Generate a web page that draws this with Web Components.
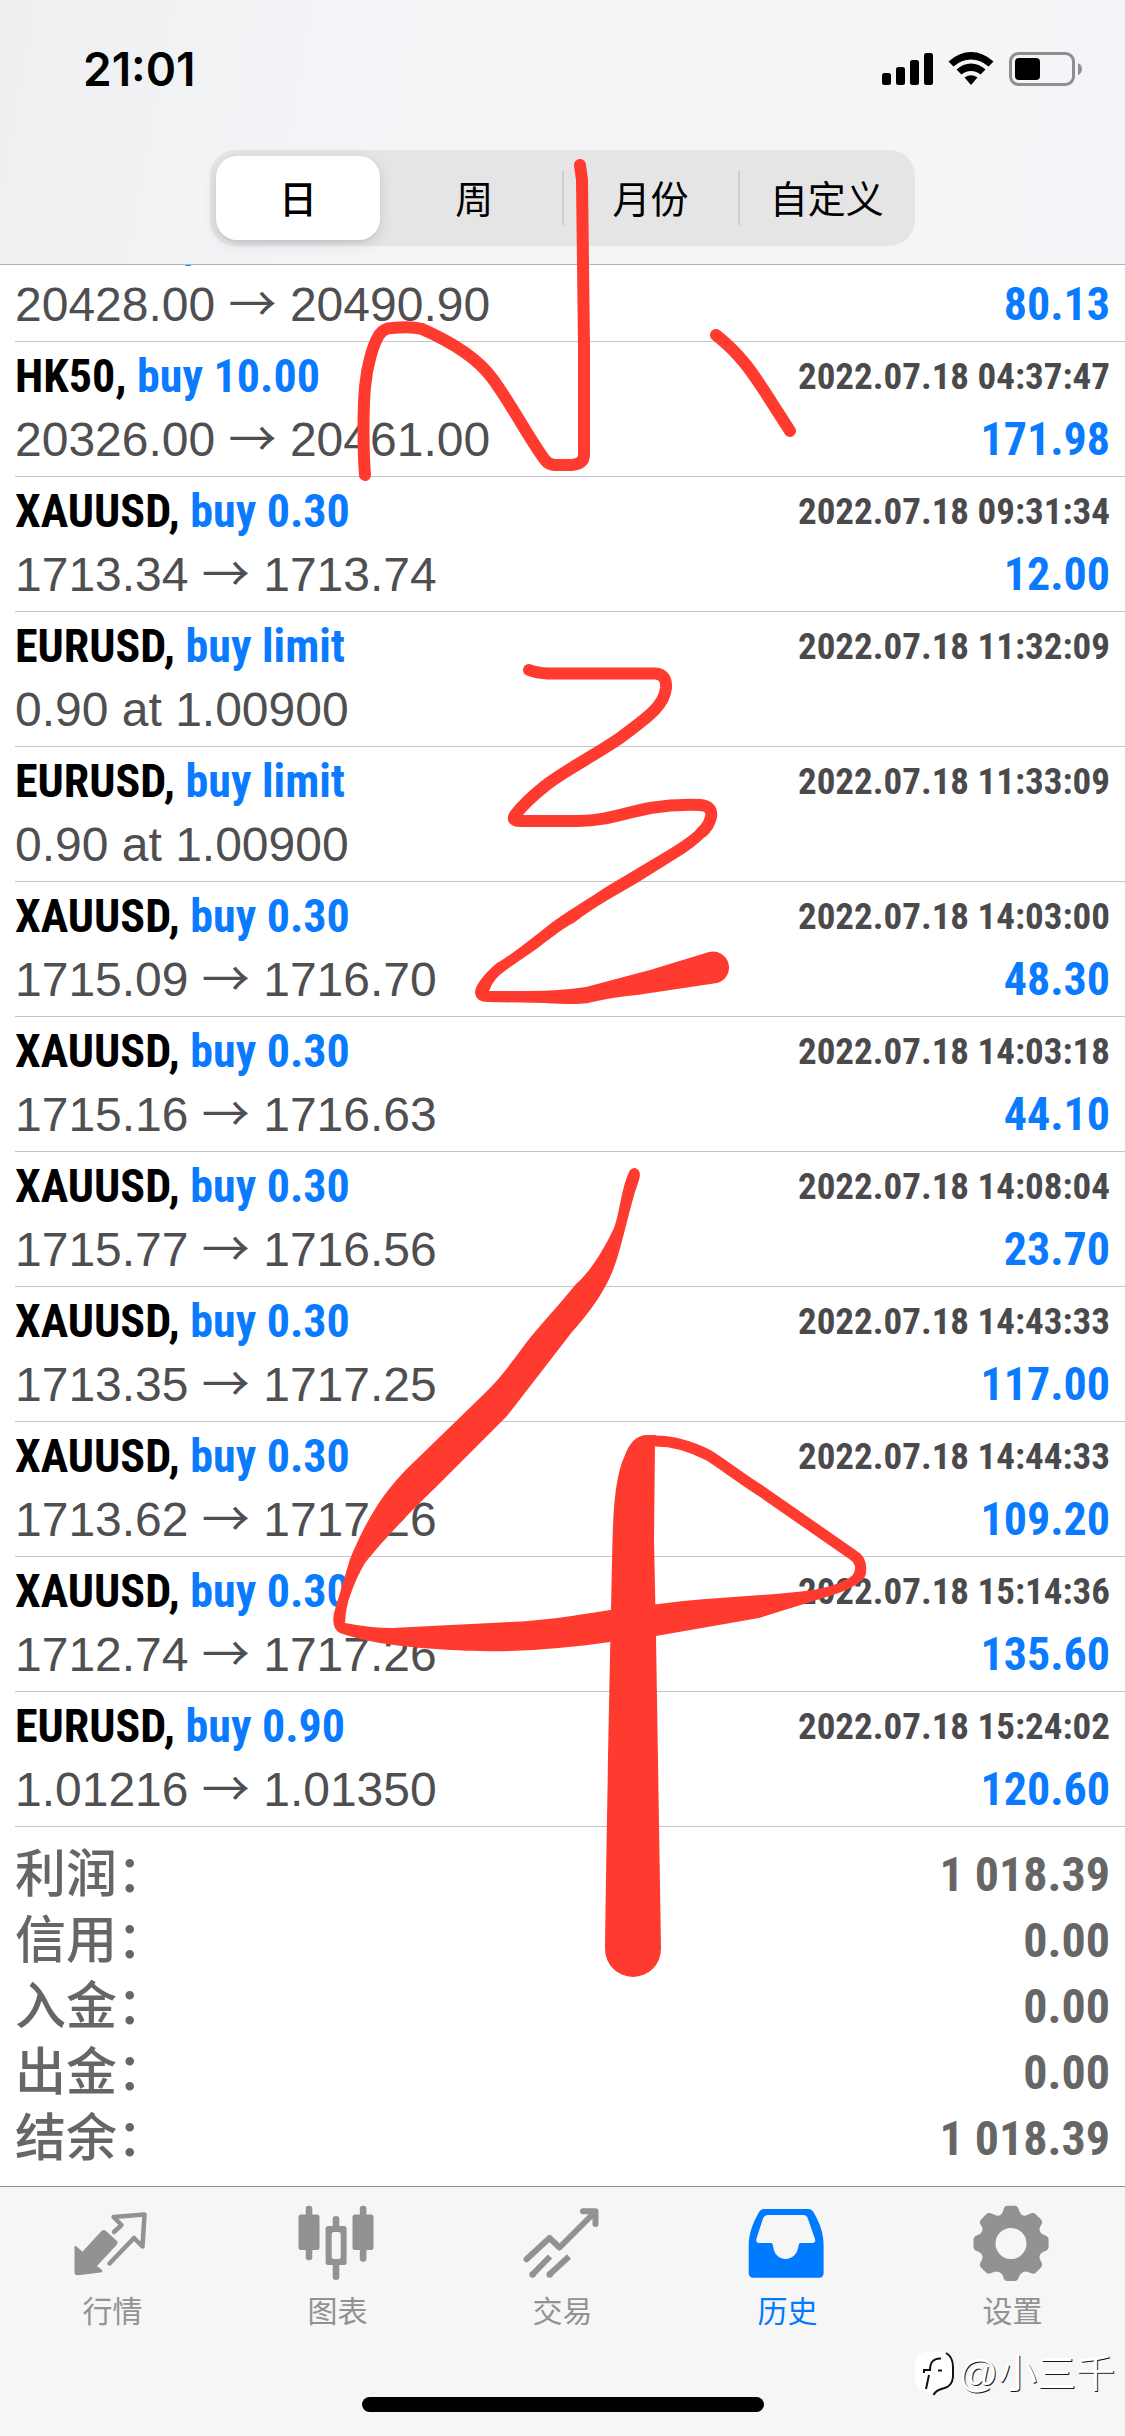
<!DOCTYPE html>
<html lang="zh-CN">
<head>
<meta charset="utf-8">
<meta name="viewport" content="width=device-width, initial-scale=1">
<title>历史</title>
<style>
  html, body { margin: 0; height: 100%; background: #fff; }
  body {
    --blue: #0a7aff;
    --narrow: "Roboto Condensed", "Liberation Sans Narrow", "Noto Sans CJK SC", sans-serif;
    --sans: "Liberation Sans", "Noto Sans CJK SC", sans-serif;
    font-family: var(--sans);
  }
</style>
</head>
<body>
<history-app></history-app>

<script>
const define = (name, html, setup) => {
  const template = document.createElement('template');
  template.innerHTML = html;
  customElements.define(name, class extends HTMLElement {
    constructor() {
      super();
      this.attachShadow({ mode: 'open' }).append(template.content.cloneNode(true));
    }
    connectedCallback() { if (setup) setup(this, this.shadowRoot); }
  });
};

define('status-bar', `
<style>
  :host { display: flex; justify-content: space-between; align-items: center; height: 138px; padding: 0 43px 0 83px; }
  time { font: 600 46px/48px Inter, sans-serif; color: #000; }
  svg { display: block; }
</style>
<time>21:01</time>
<svg width="200" height="36" viewBox="0 0 200 36" role="img" aria-label="信号 Wi-Fi 电池">
  <rect x="0" y="22" width="9" height="12" rx="2.5"/>
  <rect x="14" y="16" width="9" height="18" rx="2.5"/>
  <rect x="28" y="9" width="9" height="25" rx="2.5"/>
  <rect x="42" y="2" width="9" height="32" rx="2.5"/>
  <path d="M66.500 10.500Q77 1 89 1Q101 1 111.500 10.500L106.500 15.500Q98.500 8.500 89 8.500Q79.500 8.500 71.500 15.500Z"/>
  <path d="M74.500 18.500Q81 12.500 89 12.500Q97 12.500 103.500 18.500L98.500 23.500Q94.500 20 89 20Q83.500 20 79.500 23.500Z"/>
  <path d="M82.500 26.500Q89 22 95.500 26.500L89 34Z"/>
  <rect x="128.500" y="2.500" width="63" height="31" rx="8" fill="none" stroke="#8f8f91" stroke-width="3"/>
  <rect x="133" y="7" width="25" height="22" rx="4"/>
  <path d="M196 12Q200 14 200 18Q200 22 196 24Z" fill="#8f8f91"/>
</svg>`);

define('period-switch', `
<style>
  :host { display: flex; justify-content: center; padding: 12px 0 18px; }
  fieldset { display: flex; width: 705px; max-width: 90%; height: 96px; margin: 0; padding: 0; border: 0; border-radius: 26px; background: #e5e5e6; }
  label { flex: 1; display: flex; padding: 6px; position: relative; }
  input { position: absolute; opacity: 0; }
  span { flex: 1; display: flex; align-items: center; justify-content: center; padding-top: 4px; border-radius: 21px; font: 400 38px/44px var(--sans); color: #000; }
  input:checked + span { background: #fff; font-weight: 500; box-shadow: 0 4px 14px rgba(0,0,0,.12), 0 2px 2px rgba(0,0,0,.05); }
  i { align-self: center; width: 2px; height: 54px; margin: 0 -1px; background: #cdcdd0; }
</style>
<fieldset aria-label="时间范围">
  <label><input type="radio" name="period" checked><span>日</span></label>
  <label><input type="radio" name="period"><span>周</span></label>
  <i></i>
  <label><input type="radio" name="period"><span>月份</span></label>
  <i></i>
  <label><input type="radio" name="period"><span>自定义</span></label>
</fieldset>`);

define('deal-row', `
<style>
  :host { display: block; flex: none; margin-left: 15px; padding: 3px 15px 5px 0; border-bottom: 1px solid #c5c5c8; }
  div { display: flex; justify-content: space-between; align-items: center; height: 63px; white-space: nowrap; }
  b { font: 700 46px/63px var(--narrow); color: #000; }
  em { font-style: normal; color: var(--blue); }
  time { font: 700 37px/63px var(--narrow); color: #4a4a4d; }
  .price { font: 400 48px/63px "Liberation Sans", sans-serif; color: #4f4f52; }
  .price span { font-family: "Noto Sans CJK SC", sans-serif; line-height: 48px; }
  .gain { color: var(--blue); }
</style>
<div><b><slot name="symbol"></slot>, <em><slot name="side"></slot></em></b><time></time></div>
<div><span class="price"></span><b class="gain"></b></div>`, (el, root) => {
  root.querySelector('time').textContent = el.getAttribute('time');
  root.querySelector('.gain').textContent = el.getAttribute('gain') || '';
  root.querySelector('.price').innerHTML = el.getAttribute('price').replace('→', '<span>→</span>');
});

define('summary-row', `
<style>
  :host { display: flex; justify-content: space-between; align-items: center; height: 66px; padding: 0 15px; color: #666; }
  dt { font: 500 51px/66px var(--sans); }
  dd { margin: 0; font: 700 48px/66px var(--narrow); }
</style>
<dt><slot></slot></dt><dd><slot name="value"></slot></dd>`);

define('tab-item', `
<style>
  :host { flex: 1; display: flex; }
  a { flex: 1; display: flex; flex-direction: column; align-items: center; gap: 6px; text-decoration: none; color: #929292; font: 400 30px/44px var(--sans); }
  :host([active]) a { color: #007aff; }
  ::slotted(svg) { display: block; }
</style>
<a href="#"><slot name="icon"></slot><slot></slot></a>`, (el, root) => {
  if (el.hasAttribute('active')) root.querySelector('a').setAttribute('aria-current', 'page');
});

define('bottom-tabs', `
<style>
  :host { display: flex; flex-direction: column; height: 249px; border-top: 1px solid #8e8e90; background: #f6f6f6; }
  nav { display: flex; padding-top: 17px; }
  .home { width: 402px; height: 15px; border-radius: 8px; background: #000; margin: auto auto 24px; }
</style>
<nav>
  <tab-item>
    <svg slot="icon" width="80" height="80" viewBox="1 0 80 80" fill="currentColor">
      <path d="M2.500 43Q2.500 41 4.500 42.500L10.400 47.700L29.500 27Q31.500 25 34 27L45 37Q46.500 39 44.500 41L25 62L30 66Q31 68 28.500 68.500L6 71.300Q2.500 71.500 2.500 68Z"/>
      <path d="M42 28L49.500 21L41.500 13L72.500 10.500L70.500 42.500L62 34L37.500 59.500" fill="none" stroke="currentColor" stroke-width="4.500" stroke-linecap="round" stroke-linejoin="round"/>
    </svg>行情</tab-item>
  <tab-item>
    <svg slot="icon" width="80" height="80" viewBox="1 0 80 80" fill="currentColor">
      <rect x="1.500" y="10.500" width="21" height="35.500" rx="2.500"/><rect x="8.700" y="1.700" width="6.600" height="54.500" rx="3"/>
      <path fill-rule="evenodd" d="M31 22H47Q49.600 22 49.600 24.500V58.500Q49.600 61 47 61H31Q28.600 61 28.600 58.500V24.500Q28.600 22 31 22ZM37 28Q34.700 28 34.700 30V53Q34.700 55 37 55H41.500Q43.700 55 43.700 53V30Q43.700 28 41.500 28Z"/>
      <path d="M35.700 23V15Q35.700 12 39 12Q42.300 12 42.300 15V23ZM35.700 60V73Q35.700 76 39 76Q42.300 76 42.300 73V60Z"/>
      <rect x="55.500" y="10.500" width="21" height="35.500" rx="2.500"/><rect x="62.800" y="1.700" width="6.600" height="56" rx="3"/>
    </svg>图表</tab-item>
  <tab-item>
    <svg slot="icon" width="80" height="80" viewBox="1 0 80 80" fill="none" stroke="currentColor" stroke-width="6">
      <path d="M4.500 55.300L27.500 34L37.500 43.500L73 8M61 7.300H73.500V20" stroke-linecap="round" stroke-linejoin="round"/>
      <path d="M28 52.500L11 70M47 52.500L28 70"/>
      <g fill="currentColor" stroke="none"><circle cx="10.500" cy="70.500" r="3.200"/><circle cx="27.700" cy="70.500" r="3.200"/></g>
    </svg>交易</tab-item>
  <tab-item active>
    <svg slot="icon" width="80" height="80" viewBox="1 0 80 80" fill="currentColor">
      <path fill-rule="evenodd" d="M17 5H61Q65 5 67 9C73 20 76.600 29 76.600 42V69Q76.600 73.700 72 73.700H6.500Q1.700 73.700 1.700 69V42C1.700 29 6 19 11.500 9Q13.500 5 17 5ZM21 11Q17.500 11 16 14.500L9.500 34.500Q8.500 39 12 39H23.500Q26 39 26 42C27 50 32 55 38.500 55S50.500 50 51.500 42Q51.500 39 54 39H65.500Q69 39 68 35L61 15Q60 11 56 11Z"/>
    </svg>历史</tab-item>
  <tab-item>
    <svg slot="icon" width="80" height="80" viewBox="1 0 80 80" fill="currentColor">
      <path fill-rule="evenodd" d="M35 1.700H43Q45 1.700 46 4L48 8.500Q49 11 51.500 11.500Q54 12 56 10.500L60 9Q62 8.500 63.500 10L69 15.500Q70.500 17 70 19.500L68 23Q67 25.500 68 27.500Q69 29.500 71 30.500L74.500 32Q76.600 33 76.600 35.500V43Q76.600 45.500 74.500 46.500L71 48Q69 49 68 51Q67 53 68 55.500L70 59.500Q70.500 62 69 63.500L63.500 69Q62 70 60 69.500L56 68Q54 67 51.500 68Q49 69 48 71L46 75Q45 77 43 77H35Q33 77 32 75L30.500 71Q29 69 27 68Q24.500 67 22 68L18 69.500Q16 70 14.500 69L9 63.500Q7.500 62 8 59.500L10 55.500Q11 53 10 51Q9 49 7 48L3.500 46.500Q1.500 45.500 1.500 43V35.500Q1.500 33 3.500 32L7 30.500Q9 29.500 10 27.500Q11 25.500 10 23L8 19.500Q7.500 17 9 15.500L14.500 10Q16 8.500 18 9L22 10.500Q24.500 12 27 11.500Q29 11 30.500 8.500L32 4Q33 1.700 35 1.700ZM39 24A15.500 15.500 0 1 0 39 55A15.500 15.500 0 1 0 39 24Z"/>
    </svg>设置</tab-item>
</nav>
<div class="home"></div>`);

define('ink-layer', `
<style>
  :host { position: absolute; inset: 0 0 auto 0; pointer-events: none; }
  svg { display: block; width: 100%; height: auto; }
</style>
<svg viewBox="0 0 1125 2436" fill="#ff3b30" aria-hidden="true">
  <g fill="none" stroke="#ff3b30" stroke-width="12" stroke-linecap="round" stroke-linejoin="round">
    <path d="M365 475C363 450 363 410 365 387C367 365 373 345 379 335Q384 328 392 328C402 327 415 327 422 329C447 340 475 355 492 378C512 405 528 437 545 460Q549 465 555 465H572Q584 464 584 455L584 347L582 180L580 165"/>
    <path d="M716 335C740 354 752 372 765 392L790 431"/>
    <path d="M529 670Q537 673 548 673.500H655Q667 674 666 688C664 708 642 721 620 738C592 757 562 772 545 786Q526 801 515 815Q511 821 520 821H578C606 821 624 813 650 808Q675 804 700 805Q713 806 711 817Q709 826 702 832"/>
  </g>
  <path d="M698 828Q690 837 663 853L606 887C588 899 571 909 554 921C533 937 512 955 497 963C484 974 475 985 475 993Q476 1002 488 1002L545 1003Q575 1005 588 1003Q613 997 637 995L717 983A16 16 0 0 0 709 952L650 970L586 987Q560 991 527 991H489Q493 979 506 970L535 950C550 939 560 930 575 922C594 907 615 896 637 883L685 853Q704 840 711 829Z"/>
  <path d="M629 1172C621 1189 620 1212 614 1228C604 1249 591 1271 576 1284C559 1305 541 1324 526 1343C512 1362 499 1380 484 1394L415 1461C400 1475 388 1489 377 1506C366 1523 357 1542 350 1559L334 1613Q331 1628 340 1633Q357 1639 380 1643C417 1649 472 1652 510 1651C541 1650 575 1647 610 1642L656 1636L759 1618L836 1594Q853 1588 861 1581Q867 1576 866 1568L855 1569Q855 1576 845 1580Q835 1586 813 1590C776 1595 726 1597 683 1601L610 1610C572 1616 541 1621 510 1622L392 1628Q370 1628 345 1623Q346 1606 350 1596Q356 1578 365 1563C384 1539 413 1509 434 1489L507 1416L572 1332Q599 1302 611 1275C619 1258 627 1219 635 1192L639 1180Q642 1170 635 1168Q631 1168 629 1172Z"/>
  <path d="M860 1574Q863 1561 853 1555L761 1491C736 1475 720 1462 708 1455Q680 1441 656 1441" fill="none" stroke="#ff3b30" stroke-width="11" stroke-linecap="round" stroke-linejoin="round"/>
  <path d="M656 1435H646Q632 1436 625 1455C613 1480 613 1525 612 1560C610 1660 607 1800 605 1949A28 28 0 0 0 661 1949L656 1636L654 1540L655 1442Z"/>
</svg>`);

define('author-mark', `
<style>
  :host { position: absolute; right: 10px; bottom: 34px; display: flex; align-items: center; gap: 2px; color: #fff; font: 400 39px/56px var(--sans); text-shadow: 1px 1px 0 #1a1a1a; pointer-events: none; }
  svg { display: block; }
</style>
<svg width="42" height="46" viewBox="0 0 42 46" aria-hidden="true">
  <path d="M13 1H28Q41 2 40 16V28Q39 37 28 38Q23 39 20 45Q20 41 14 41Q1 40 1 28V15Q1 1 13 1Z" fill="#fff"/>
  <path d="M32 2Q39 6 39 16V26Q38 36 29 37.500Q22 39 19.500 44M27 7.500Q16 7 16 19H10V22M15 24L12 38M24 19.500H28" fill="none" stroke="#111" stroke-width="2"/>
</svg><span>@小三千</span>`);

define('history-app', `
<style>
  :host { position: relative; display: flex; flex-direction: column; height: 100vh; overflow: hidden; background: #fff; }
  header { flex: none; border-bottom: 1px solid #b3b3b5; background: linear-gradient(100deg, #efeff0 0%, #f3f4f7 28%, #f5f5f6 60%, #f4f5f8 100%); }
  main { flex: 1; min-height: 0; display: flex; flex-direction: column; justify-content: flex-end; overflow: hidden; }
  dl { flex: none; margin: 0; padding: 15px 0 14px; }
  bottom-tabs { flex: none; }
</style>
<header><status-bar></status-bar><period-switch></period-switch></header>
<main><dl></dl></main>
<bottom-tabs></bottom-tabs>
<ink-layer></ink-layer>
<author-mark></author-mark>`, (el, root) => {
  const deals = [
    ['HK50', 'buy 10.00', '2022.07.18 04:35:12', '20428.00 → 20490.90', '80.13'],
    ['HK50', 'buy 10.00', '2022.07.18 04:37:47', '20326.00 → 20461.00', '171.98'],
    ['XAUUSD', 'buy 0.30', '2022.07.18 09:31:34', '1713.34 → 1713.74', '12.00'],
    ['EURUSD', 'buy limit', '2022.07.18 11:32:09', '0.90 at 1.00900', ''],
    ['EURUSD', 'buy limit', '2022.07.18 11:33:09', '0.90 at 1.00900', ''],
    ['XAUUSD', 'buy 0.30', '2022.07.18 14:03:00', '1715.09 → 1716.70', '48.30'],
    ['XAUUSD', 'buy 0.30', '2022.07.18 14:03:18', '1715.16 → 1716.63', '44.10'],
    ['XAUUSD', 'buy 0.30', '2022.07.18 14:08:04', '1715.77 → 1716.56', '23.70'],
    ['XAUUSD', 'buy 0.30', '2022.07.18 14:43:33', '1713.35 → 1717.25', '117.00'],
    ['XAUUSD', 'buy 0.30', '2022.07.18 14:44:33', '1713.62 → 1717.26', '109.20'],
    ['XAUUSD', 'buy 0.30', '2022.07.18 15:14:36', '1712.74 → 1717.26', '135.60'],
    ['EURUSD', 'buy 0.90', '2022.07.18 15:24:02', '1.01216 → 1.01350', '120.60'],
  ];
  const totals = [['利润：', '1 018.39'], ['信用：', '0.00'], ['入金：', '0.00'], ['出金：', '0.00'], ['结余：', '1 018.39']];
  const dl = root.querySelector('dl');
  dl.insertAdjacentHTML('beforebegin', deals.map(([symbol, side, time, price, gain]) =>
    `<deal-row time="${time}" price="${price}" gain="${gain}"><span slot="symbol">${symbol}</span><span slot="side">${side}</span></deal-row>`).join(''));
  dl.innerHTML = totals.map(([label, value]) =>
    `<summary-row>${label}<span slot="value">${value}</span></summary-row>`).join('');
});
</script>
</body>
</html>
